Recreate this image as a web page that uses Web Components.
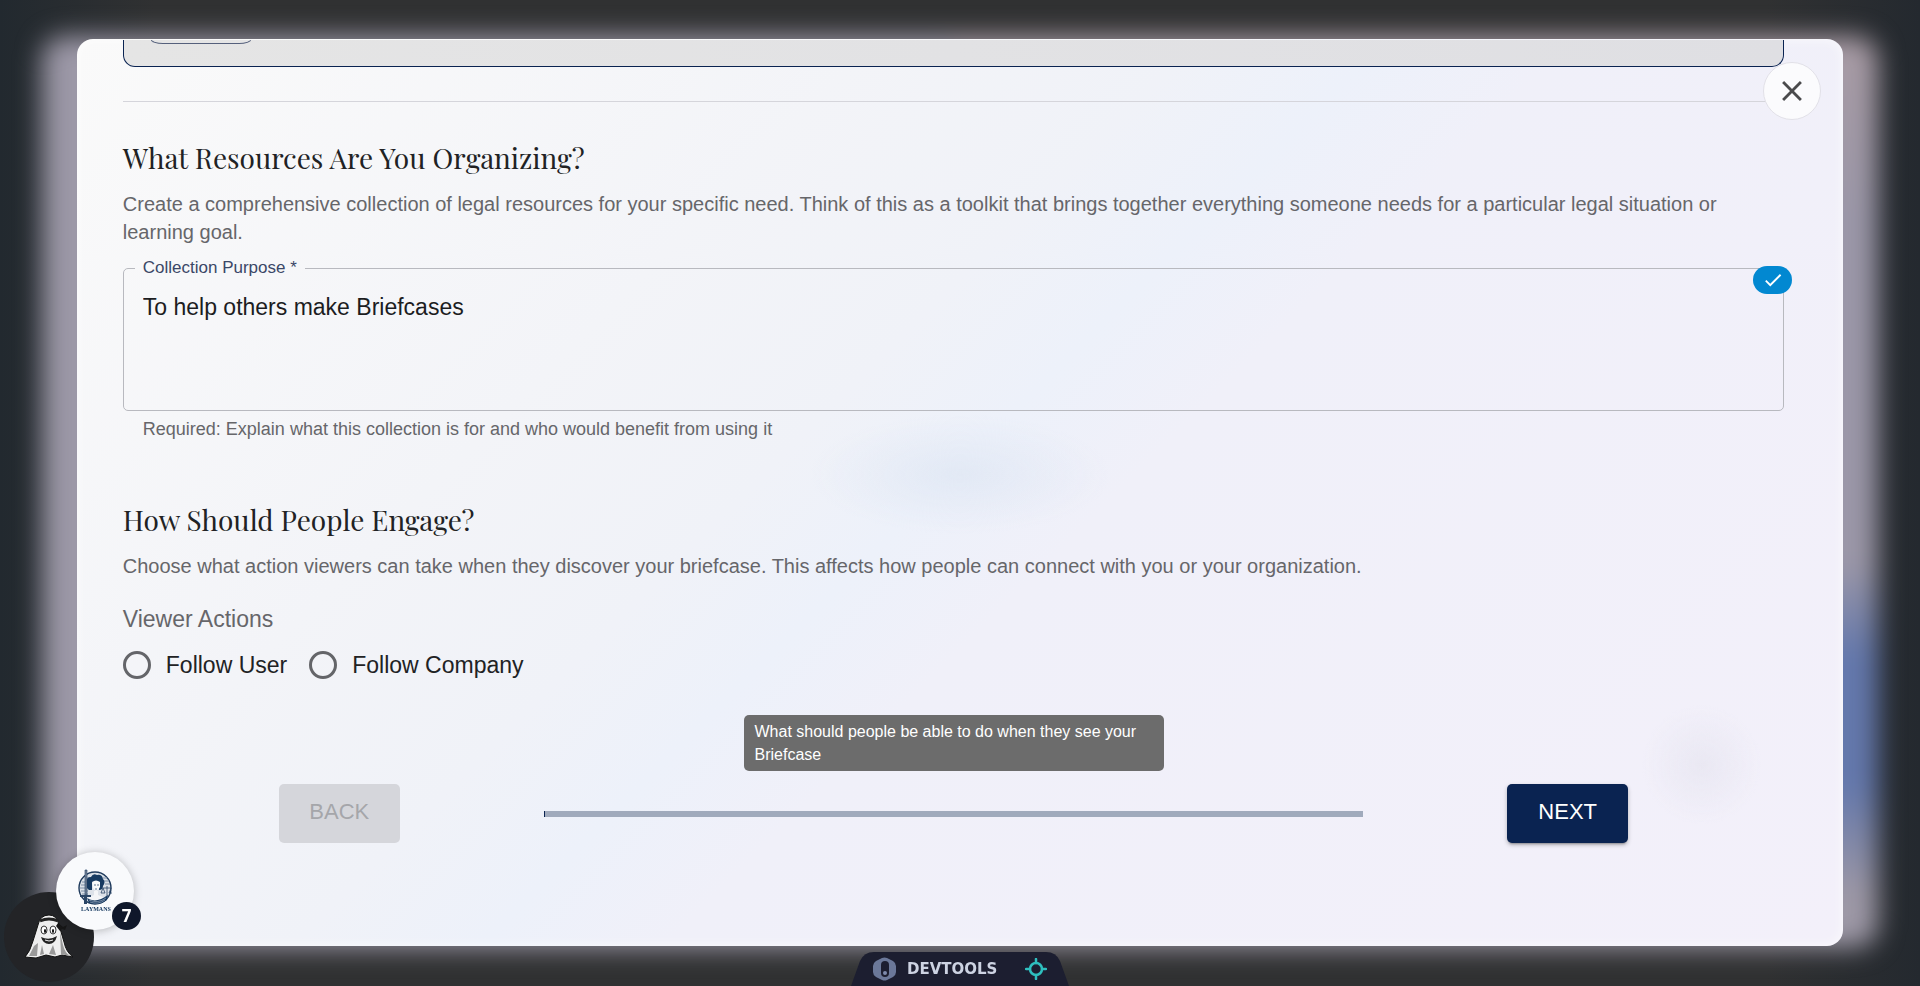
<!DOCTYPE html>
<html lang="en">
<head>
<meta charset="utf-8">
<meta name="viewport" content="width=device-width, initial-scale=1">
<title>Create Briefcase</title>
<style>
  body{
    margin: 0;
    min-height: 100vh;
    background-color: #2d3033;
    font-family: "Liberation Sans", Arial, sans-serif;
    color: #212224;
  }
</style>
</head>
<body>
<briefcase-dialog>
  <template-card></template-card>
  <form-section>
    <span slot="title">What Resources Are You Organizing?</span>
    <span slot="info">Create a comprehensive collection of legal resources for your specific need. Think of this as a toolkit that brings together everything someone needs for a particular legal situation or learning goal.</span>
    <purpose-field></purpose-field>
  </form-section>
  <form-section>
    <span slot="title">How Should People Engage?</span>
    <span slot="info">Choose what action viewers can take when they discover your briefcase. This affects how people can connect with you or your organization.</span>
    <viewer-actions></viewer-actions>
  </form-section>
  <step-bar></step-bar>
</briefcase-dialog>
<floating-badges></floating-badges>
<devtools-tab></devtools-tab>

<script>
class BriefcaseDialog extends HTMLElement{

  constructor(){
    super();
    const shadowRoot = this.attachShadow({mode:'open'});
    shadowRoot.innerHTML = `
      <style>

        :host{
          display: grid;
          box-sizing: border-box;
          min-height: 100vh;
          padding: 39px 4vw 40px;
          position: relative;
          overflow: hidden;
          background: linear-gradient(90deg, #22292f, #303132 8%, #303132 92%, #24292f);
        }

        /* the dimmed page behind the dialog */
        #glow{
          position: absolute;
          inset: 36px 42px 38px;
          border-radius: 24px;
          background: linear-gradient(#a89ba4, #9b97a8 20%, #9b97a8 58%, #6478ac 68%, #6478ac 82%, #9d98a6 94%);
          filter: blur(13px);
        }

        #glow::before{
          content: "";
          position: absolute;
          inset: 0 50% 0 0;
          border-radius: 24px;
          background-color: #9c98a7;
        }

        #panel{
          position: relative;
          border-radius: 16px;
          background:
            radial-gradient(150px 60px at 50% 48%, rgba(215,225,240,0.5), transparent),
            radial-gradient(60px 60px at 92% 80%, rgba(225,224,236,0.5), transparent),
            linear-gradient(135deg, #fafafa, #f3f4f8 30%, #f0f2f8 42%, #edf1fa 49%, #f0f0f9 56%, #f3f0fa);
          box-shadow: inset 0 0 12px rgba(255,255,255,0.7);
        }

        #content{
          padding: 1px 59px 100px 46px;
        }

        #close{
          position: absolute;
          top: 23px;
          right: 22px;
          width: 58px;
          height: 58px;
          padding: 0;
          border: 1px solid #e2e1e8;
          border-radius: 50%;
          background-color: #fbfbfd;
          display: grid;
          place-items: center;
        }

      </style>
      <div id="glow"></div>
      <div id="panel">
        <div id="content"><slot></slot></div>
        <button id="close" aria-label="Close">
          <svg width="34" height="34" viewBox="0 0 24 24" fill="#4a4a4c"><path d="M19 6.41 17.59 5 12 10.59 6.41 5 5 6.41 10.59 12 5 17.59 6.41 19 12 13.41 17.59 19 19 17.59 13.41 12z"/></svg>
        </button>
      </div>
    `;
  }

}

class TemplateCard extends HTMLElement{

  constructor(){
    super();
    const shadowRoot = this.attachShadow({mode:'open'});
    shadowRoot.innerHTML = `
      <style>

        :host{
          display: block;
          border-bottom: 1px solid #d5d5db;
          padding-bottom: 34px;
        }

        #card{
          height: 26px;
          padding-left: 27px;
          border: 1px solid #0a2351;
          border-top: 0;
          border-radius: 0 0 12px 12px;
          background: linear-gradient(90deg, #e5e5e5, #dfdfe3);
        }

        #chip{
          width: 98px;
          height: 3px;
          border: 1px solid #55607c;
          border-top: 0;
          border-radius: 0 0 12px 12px / 0 0 4px 4px;
        }

      </style>
      <div id="card"><div id="chip"></div></div>
    `;
  }

}

class FormSection extends HTMLElement{

  constructor(){
    super();
    const shadowRoot = this.attachShadow({mode:'open'});
    shadowRoot.innerHTML = `
      <style>

        :host{
          display: block;
          padding-top: 36px;
        }

        :host(:nth-of-type(n+2)){
          padding-top: 60px;
        }

        h2{
          margin: 0;
          font: 400 28px/40px "Playfair Display", "Liberation Serif", serif;
        }

        p{
          margin: 12px 0 0;
          font-size: 20px;
          line-height: 28px;
          color: #66666a;
        }

      </style>
      <h2><slot name="title"></slot></h2>
      <p><slot name="info"></slot></p>
      <slot></slot>
    `;
  }

}

class PurposeField extends HTMLElement{

  constructor(){
    super();
    const shadowRoot = this.attachShadow({mode:'open'});
    shadowRoot.innerHTML = `
      <style>

        :host{
          display: block;
          position: relative;
          padding-top: 12px;
        }

        fieldset{
          margin: 0;
          padding: 0 19px;
          border: 1px solid #b8b9bf;
          border-radius: 5px;
        }

        legend{
          margin-left: -8px;
          padding: 0 8px;
          font-size: 17px;
          line-height: 20px;
          color: #3b4767;
        }

        textarea{
          display: block;
          box-sizing: border-box;
          width: 100%;
          height: 132px;
          padding: 16px 0;
          border: 0;
          outline: 0;
          resize: none;
          background: none;
          font: 23px/26px "Liberation Sans", Arial, sans-serif;
          color: #1c1d1f;
        }

        #help{
          margin: 7px 20px 0;
          font-size: 18px;
          line-height: 22px;
          color: #66666a;
        }

        #done{
          position: absolute;
          top: 20px;
          right: -8px;
          width: 39px;
          height: 28px;
          border-radius: 14px;
          background-color: #0288d1;
          display: grid;
          place-items: center;
        }

      </style>
      <fieldset>
        <legend><label for="purpose">Collection Purpose *</label></legend>
        <textarea id="purpose" aria-describedby="help" required>To help others make Briefcases</textarea>
      </fieldset>
      <div id="help">Required: Explain what this collection is for and who would benefit from using it</div>
      <div id="done">
        <svg width="22" height="22" viewBox="0 0 24 24" fill="#fff"><path d="M9 16.17 4.83 12l-1.42 1.41L9 19 21 7l-1.41-1.41z"/></svg>
      </div>
    `;
  }

}

class ViewerActions extends HTMLElement{

  constructor(){
    super();
    const shadowRoot = this.attachShadow({mode:'open'});
    shadowRoot.innerHTML = `
      <style>

        :host{
          display: block;
          padding-top: 24px;
        }

        fieldset{
          margin: 0;
          padding: 0;
          border: 0;
        }

        legend{
          padding: 0;
          font-size: 23px;
          line-height: 30px;
          color: #66666a;
        }

        #options{
          display: flex;
          gap: 22px;
          padding-top: 16px;
        }

        label{
          display: flex;
          align-items: center;
          gap: 15px;
          font-size: 23px;
          line-height: 30px;
        }

        input{
          appearance: none;
          width: 28px;
          height: 28px;
          margin: 0;
          border: 3px solid #646569;
          border-radius: 50%;
        }

      </style>
      <fieldset>
        <legend>Viewer Actions</legend>
        <div id="options">
          <label><input type="radio" name="action">Follow User</label>
          <label><input type="radio" name="action">Follow Company</label>
        </div>
      </fieldset>
    `;
  }

}

class StepBar extends HTMLElement{

  constructor(){
    super();
    const shadowRoot = this.attachShadow({mode:'open'});
    shadowRoot.innerHTML = `
      <style>

        :host{
          display: flex;
          align-items: center;
          gap: 144px;
          padding: 104px 156px 0;
          position: relative;
        }

        button{
          width: 121px;
          height: 59px;
          padding: 0 0 3px;
          border: 0;
          border-radius: 5px;
          font: 22px/28px "Liberation Sans", Arial, sans-serif;
        }

        #back{
          background-color: #d5d6db;
          color: #a5a6aa;
        }

        #next{
          background-color: #0a2351;
          color: #fff;
          box-shadow: 0 3px 2px -2px rgba(0,0,0,0.25), 0 2px 4px rgba(0,0,0,0.25);
        }

        #progress{
          flex: 1;
          height: 6px;
          border-left: 1px solid #0a2351;
          box-sizing: border-box;
          background-color: #a0aabc;
        }

        #tooltip{
          position: absolute;
          top: 35px;
          left: 50%;
          transform: translateX(-50%);
          box-sizing: border-box;
          width: 420px;
          padding: 5px 11px;
          border-radius: 5px;
          background-color: #6c6c6c;
          color: #fff;
          font-size: 16px;
          line-height: 23px;
        }

      </style>
      <button id="back" disabled>BACK</button>
      <div id="progress" role="progressbar" aria-label="Progress" aria-valuenow="0"></div>
      <button id="next">NEXT</button>
      <div id="tooltip" role="tooltip">What should people be able to do when they see your Briefcase</div>
    `;
  }

}

class FloatingBadges extends HTMLElement{

  constructor(){
    super();
    const shadowRoot = this.attachShadow({mode:'open'});
    shadowRoot.innerHTML = `
      <style>

        :host{
          position: fixed;
          left: 4px;
          bottom: 4px;
          width: 137px;
          height: 130px;
        }

        button{
          position: absolute;
          padding: 0;
          border: 0;
          border-radius: 50%;
          display: grid;
          place-items: center;
        }

        #ghost{
          left: 0;
          bottom: 0;
          width: 90px;
          height: 90px;
          background-color: #232427;
        }

        #brand{
          left: 52px;
          top: 0;
          width: 78px;
          height: 78px;
          background-color: #f9fafc;
          box-shadow: 0 1px 8px rgba(0,0,0,0.25);
        }

        #count{
          position: absolute;
          left: 108px;
          top: 50px;
          width: 29px;
          height: 28px;
          border-radius: 50%;
          background-color: #0f172a;
          color: #fff;
          font: 700 17px/28px "Open Sans", "Noto Sans", sans-serif;
          text-align: center;
        }

        svg text{
          font: 700 6px "Liberation Serif", serif;
        }

      </style>
      <button id="ghost" aria-label="Ghost">
        <svg width="50" height="46" viewBox="0 0 50 46">
          <path d="M1 43 Q6 38 9 27 L14 11 Q16 1 25 1 Q33 1 35 11 L40 28 Q42 38 49 43 L38 41 L31 43 L22 41 L12 44Z" fill="#eee" stroke="#111"/>
          <path d="M36 18 39 31Q41 39 46 42L37 40ZM29 31 32 41 25 40ZM10 32 14 29 13 42 5 42ZM18 31 20 40 16 41Z" fill="#999"/>
          <path d="M16 7Q25 3 34 7" fill="none" stroke="#222" stroke-width="3"/>
          <path d="M34 9 39 13 43 11 41 16 38 15 36 17 32 12Z" fill="#161616"/>
          <ellipse cx="20" cy="16" rx="3" ry="4" fill="#fff" stroke="#333"/>
          <ellipse cx="29" cy="16" rx="3" ry="4" fill="#fff" stroke="#333"/>
          <ellipse cx="21" cy="17" rx="1" ry="2"/><ellipse cx="29" cy="17" rx="1" ry="2"/>
          <path d="M17 23Q25 27 33 22 31 30 25 30T17 23Z" fill="#222"/>
          <path d="M21 26Q25 28 29 26" fill="none" stroke="#eee"/>
        </svg>
      </button>
      <button id="brand" aria-label="Laymans">
        <svg width="38" height="44" viewBox="0 0 38 44">
          <circle cx="19" cy="19" r="16" fill="#dce1e8" stroke="#1f3a5c" stroke-width="1.4"/>
          <path d="M10 9h4M6 13h6M5 16h7M4 19h7M5 22h7M6 25h6M27 9h4M28 12h5M29 15h5M29 28h3" stroke="#7f90a7"/>
          <path d="M13 21Q9 18 11 13 10 8 15 8 17 4 21 6 26 5 27 10 30 13 27 17 27 21 23 21L23 14 16 14 16 21Z" fill="#173a61"/>
          <path d="M16 13Q20 10 24 13V18Q20 25 17 19Z" fill="#fafafa"/>
          <path d="M18 16h2M21 16h2M19 20h2" stroke="#173a61" stroke-width="0.7"/>
          <path d="M18 22h4v4l7 3-5 4H13l-2-4 7-3Z" fill="#f4f5f7"/>
          <path d="M11 29Q20 35 32 26L31 31Q23 37 13 34Z" fill="#173a61"/>
          <path d="M13 31q9 4 17-2M14 33q8 3 15-2" fill="none" stroke="#9aa9bd" stroke-width="0.7"/>
          <path d="M9 1h2v25H9z" fill="#7b8798" stroke="#173a61" stroke-width="0.6"/>
          <path d="M4 26h11v2H4zM8 28h3v7H8z" fill="#2b4566"/>
          <path d="M31 17v10M27 19h8M27 19l-2 5h4zM35 19l-2 5h3" fill="none" stroke="#2b4566" stroke-width="0.8"/>
          <text x="20" y="42" text-anchor="middle" fill="#173a61">LAYMANS</text>
        </svg>
      </button>
      <div id="count">7</div>
    `;
  }

}

class DevtoolsTab extends HTMLElement{

  constructor(){
    super();
    const shadowRoot = this.attachShadow({mode:'open'});
    shadowRoot.innerHTML = `
      <style>

        :host{
          position: fixed;
          left: 50%;
          bottom: 0;
          width: 218px;
          height: 34px;
          transform: translateX(-50%);
        }

        #shape{
          position: absolute;
          inset: 0;
        }

        button{
          position: relative;
          width: 100%;
          height: 34px;
          padding: 0 22px;
          border: 0;
          background: none;
          display: flex;
          align-items: center;
          color: #cdd3e2;
          font: 700 15px "DejaVu Sans", sans-serif;
        }

        span{
          flex: 1;
          padding-left: 11px;
          text-align: left;
        }

      </style>
      <svg id="shape" width="218" height="34" viewBox="0 0 218 34"><path d="M0 34 9 9Q13 0 23 0H195Q205 0 209 9L218 34Z" fill="#1c1e30"/></svg>
      <button>
        <svg width="23" height="24" viewBox="0 0 23 24">
          <path d="M9 1Q11.500 0 14 1L20 4Q23 6 23 9V15Q23 18 20 20L14 23Q11.500 24 9 23L3 20Q0 18 0 15V9Q0 6 3 4Z" fill="#6b7899"/>
          <rect x="8" y="4" width="8" height="16" rx="4" fill="#1c1e30"/>
          <circle cx="12" cy="16" r="2" fill="#7e8bad"/>
        </svg>
        <span>DEVTOOLS</span>
        <svg width="22" height="22" viewBox="0 0 22 22" fill="none" stroke="#2fbfbf" stroke-width="2.500" stroke-linecap="round">
          <circle cx="11" cy="11" r="6"/>
          <path d="M11 1V5M11 17V21M1 11H5M17 11H21"/>
        </svg>
      </button>
    `;
  }

}

customElements.define('briefcase-dialog', BriefcaseDialog);
customElements.define('template-card', TemplateCard);
customElements.define('form-section', FormSection);
customElements.define('purpose-field', PurposeField);
customElements.define('viewer-actions', ViewerActions);
customElements.define('step-bar', StepBar);
customElements.define('floating-badges', FloatingBadges);
customElements.define('devtools-tab', DevtoolsTab);
</script>
</body>
</html>
